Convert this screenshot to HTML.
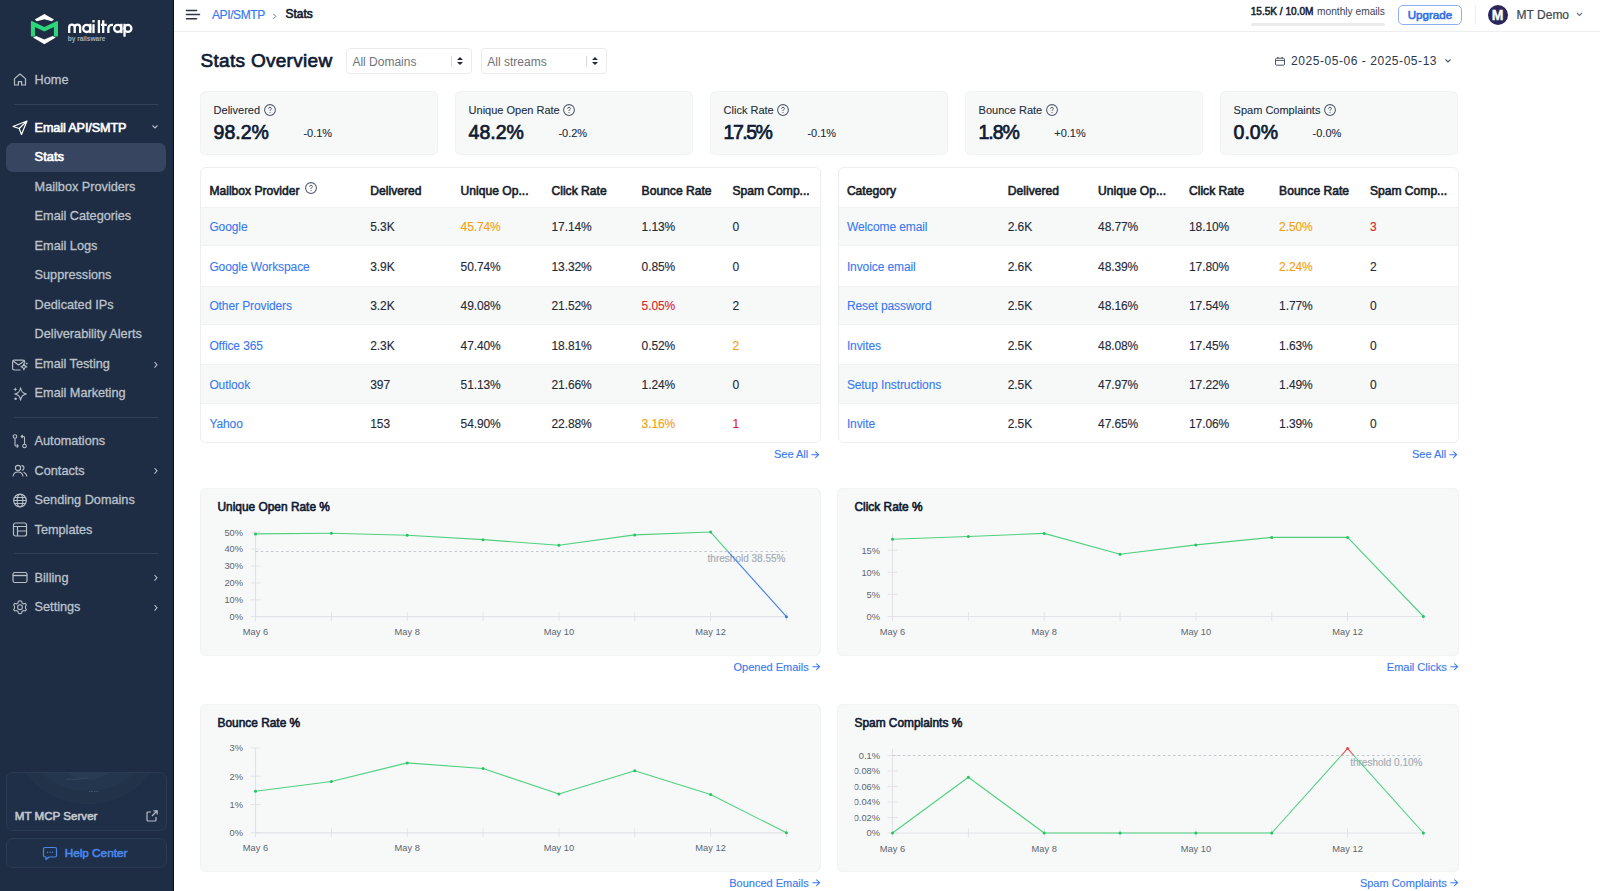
<!DOCTYPE html>
<html><head><meta charset="utf-8"><title>Stats Overview</title>
<style>
html,body{margin:0;padding:0;}
body{width:1600px;height:891px;overflow:hidden;position:relative;background:#fff;font-family:"Liberation Sans", sans-serif;}
.t{position:absolute;line-height:1;white-space:nowrap;}
svg text{font-family:"Liberation Sans", sans-serif;}
</style></head><body>
<div style="position:absolute;left:0px;top:0px;width:173px;height:891px;background:#1e2d44;border-radius:0px;box-sizing:border-box;"></div>
<div style="position:absolute;left:173px;top:0px;width:1px;height:891px;background:#060b2b;border-radius:0px;box-sizing:border-box;"></div>
<svg style="position:absolute;left:0;top:0" width="173" height="60">
<path d="M34.75 19.6 L44.35 14.05 L53.95 19.6 L51.8 21.2 L44.35 19.2 L36.9 21.2 Z" fill="#fff"/>
<path d="M30.9 36.4 V22.2 Q30.9 20.6 32.4 21.2 L44.35 26.9 L56.5 21.2 Q58 20.6 58 22.2 V36.4 H53.9 V27.1 L44.35 31.6 L34.96 27.1 V36.4 Z" fill="#2ed47a"/>
<path d="M33.0 37.6 L36.2 35.9 L44.35 39.5 L52.5 35.9 L55.8 37.6 L44.35 44.3 Z" fill="#fff"/>
<g fill="none" stroke="#fff" stroke-width="2.3">
<path d="M69.2 33.1 V27.4 A2.75 2.75 0 0 1 74.7 27.4 V33.1 M74.7 27.4 A2.72 2.72 0 0 1 80.15 27.4 V33.1"/>
<circle cx="86.75" cy="28.4" r="3.6"/><path d="M90.35 23.8 V33.1"/>
<path d="M93.5 24.2 V33.1"/>
<path d="M98.9 20 V33.1"/>
<path d="M103.2 20.3 V33.1 M100.9 24.8 H106.8"/>
<path d="M108.35 33.1 V28.4 A3.6 3.6 0 0 1 111.95 24.8 H113"/>
<circle cx="117.75" cy="28.4" r="3.6"/><path d="M121.35 23.8 V33.1"/>
<circle cx="127.95" cy="28.4" r="3.45"/><path d="M124.55 23.8 V36.7"/>
</g>
<rect x="92.35" y="20.1" width="2.3" height="2.3" fill="#fff"/>
</svg>
<div class="t" style="left:67.80px;top:36.31px;font-size:6.6px;font-weight:700;color:#a3abb7;letter-spacing:-0.05px;">by railsware</div>
<div class="t" style="left:34.60px;top:74.35px;font-size:12.7px;font-weight:400;color:#bcc2cb;-webkit-text-stroke:0.3px #bcc2cb;">Home</div>
<svg style="position:absolute;left:11px;top:72.1px;" width="18" height="16" viewBox="0 0 18 16"><path d="M3.5 13 V6.6 L9 2 L14.5 6.6 V13 H10.6 V9.6 H7.4 V13 Z" fill="none" stroke="#b7bdc6" stroke-width="1.2" stroke-linejoin="round"/></svg>
<div style="position:absolute;left:14px;top:104px;width:144px;height:1px;background:#34435a;border-radius:0px;box-sizing:border-box;"></div>
<div class="t" style="left:34.60px;top:121.63px;font-size:12.6px;font-weight:400;color:#ffffff;letter-spacing:-0.1px;-webkit-text-stroke:0.63px #ffffff;">Email API/SMTP</div>
<svg style="position:absolute;left:11px;top:119.30000000000001px;" width="18" height="16" viewBox="0 0 18 16"><path d="M2 7.5 L16 2 L10.5 15.5 L8.2 9.5 Z M8.2 9.5 L16 2" fill="none" stroke="#fff" stroke-width="1.2" stroke-linejoin="round"/></svg>
<svg style="position:absolute;left:151px;top:124.30000000000001px;" width="8" height="6" viewBox="0 0 8 6"><path d="M1.5 1.5 L4 4 L6.5 1.5" fill="none" stroke="#b7bdc6" stroke-width="1.1"/></svg>
<div style="position:absolute;left:5.5px;top:143px;width:160.5px;height:29px;background:#374560;border-radius:7px;box-sizing:border-box;"></div>
<div class="t" style="left:34.60px;top:150.88px;font-size:12.9px;font-weight:400;color:#ffffff;-webkit-text-stroke:0.65px #ffffff;">Stats</div>
<div class="t" style="left:34.60px;top:180.55px;font-size:12.7px;font-weight:400;color:#bcc2cb;-webkit-text-stroke:0.3px #bcc2cb;">Mailbox Providers</div>
<div class="t" style="left:34.60px;top:210.05px;font-size:12.7px;font-weight:400;color:#bcc2cb;-webkit-text-stroke:0.3px #bcc2cb;">Email Categories</div>
<div class="t" style="left:34.60px;top:239.55px;font-size:12.7px;font-weight:400;color:#bcc2cb;-webkit-text-stroke:0.3px #bcc2cb;">Email Logs</div>
<div class="t" style="left:34.60px;top:269.05px;font-size:12.7px;font-weight:400;color:#bcc2cb;-webkit-text-stroke:0.3px #bcc2cb;">Suppressions</div>
<div class="t" style="left:34.60px;top:298.55px;font-size:12.7px;font-weight:400;color:#bcc2cb;-webkit-text-stroke:0.3px #bcc2cb;">Dedicated IPs</div>
<div class="t" style="left:34.60px;top:328.05px;font-size:12.7px;font-weight:400;color:#bcc2cb;-webkit-text-stroke:0.3px #bcc2cb;">Deliverability Alerts</div>
<div class="t" style="left:34.60px;top:357.75px;font-size:12.7px;font-weight:400;color:#bcc2cb;-webkit-text-stroke:0.3px #bcc2cb;">Email Testing</div>
<svg style="position:absolute;left:11px;top:355.5px;" width="18" height="16" viewBox="0 0 18 16"><path d="M13.7 7.5 V6 Q13.7 4.2 12 4.2 H3.3 Q1.6 4.2 1.6 6 V12.3 Q1.6 14 3.3 14 H9.5" fill="none" stroke="#b7bdc6" stroke-width="1.2"/><path d="M2.4 5.2 L7.6 8.9 L12.8 5.2" fill="none" stroke="#b7bdc6" stroke-width="1.2" stroke-linejoin="round"/><path d="M12.9 7.6 Q13.2 10.4 15.9 10.8 Q13.2 11.2 12.9 14 Q12.6 11.2 9.9 10.8 Q12.6 10.4 12.9 7.6 Z" fill="#1e2d44" stroke="#b7bdc6" stroke-width="1.1" stroke-linejoin="round"/><circle cx="15.8" cy="7.6" r="0.9" fill="#b7bdc6"/></svg>
<svg style="position:absolute;left:153px;top:360.5px;" width="6" height="8" viewBox="0 0 6 8"><path d="M1.5 1 L4 3.8 L1.5 6.6" fill="none" stroke="#b7bdc6" stroke-width="1.1"/></svg>
<div class="t" style="left:34.60px;top:387.35px;font-size:12.7px;font-weight:400;color:#bcc2cb;-webkit-text-stroke:0.3px #bcc2cb;">Email Marketing</div>
<svg style="position:absolute;left:11px;top:385.1px;" width="18" height="16" viewBox="0 0 18 16"><path d="M9.6 2.8 Q10.3 8.2 15.4 9 Q10.3 9.8 9.6 15.2 Q8.9 9.8 3.8 9 Q8.9 8.2 9.6 2.8 Z" fill="none" stroke="#b7bdc6" stroke-width="1.1" stroke-linejoin="round"/><path d="M4.3 2.2 Q4.5 4 6.3 4.3 Q4.5 4.6 4.3 6.4 Q4.1 4.6 2.3 4.3 Q4.1 4 4.3 2.2 Z" fill="#b7bdc6"/><circle cx="4.6" cy="13.7" r="1.25" fill="#b7bdc6"/></svg>
<div style="position:absolute;left:14px;top:417px;width:144px;height:1px;background:#34435a;border-radius:0px;box-sizing:border-box;"></div>
<div class="t" style="left:34.60px;top:435.05px;font-size:12.7px;font-weight:400;color:#bcc2cb;-webkit-text-stroke:0.3px #bcc2cb;">Automations</div>
<svg style="position:absolute;left:11px;top:432.8px;" width="18" height="16" viewBox="0 0 18 16"><circle cx="4" cy="3.5" r="1.8" fill="none" stroke="#b7bdc6" stroke-width="1.1"/><circle cx="13.5" cy="13" r="1.8" fill="none" stroke="#b7bdc6" stroke-width="1.1"/><path d="M4 5.3 V12 Q4 13 5 13 H7 M5.8 11.3 L7.2 13 L5.8 14.6 M13.5 11.2 V4.5 Q13.5 3.5 12.5 3.5 H10.5 M11.7 2 L10.2 3.5 L11.7 5" fill="none" stroke="#b7bdc6" stroke-width="1.1"/></svg>
<div class="t" style="left:34.60px;top:464.55px;font-size:12.7px;font-weight:400;color:#bcc2cb;-webkit-text-stroke:0.3px #bcc2cb;">Contacts</div>
<svg style="position:absolute;left:11px;top:462.3px;" width="18" height="16" viewBox="0 0 18 16"><circle cx="7" cy="6" r="2.6" fill="none" stroke="#b7bdc6" stroke-width="1.1"/><path d="M2 14.5 Q2.5 10 7 10 Q11.5 10 12 14.5" fill="none" stroke="#b7bdc6" stroke-width="1.1"/><path d="M10.5 3.6 Q13 3.8 13 6 Q13 8 10.8 8.5 M12.5 10.2 Q15.5 11 15.8 14.5" fill="none" stroke="#b7bdc6" stroke-width="1.1"/></svg>
<svg style="position:absolute;left:153px;top:467.3px;" width="6" height="8" viewBox="0 0 6 8"><path d="M1.5 1 L4 3.8 L1.5 6.6" fill="none" stroke="#b7bdc6" stroke-width="1.1"/></svg>
<div class="t" style="left:34.60px;top:494.05px;font-size:12.7px;font-weight:400;color:#bcc2cb;-webkit-text-stroke:0.3px #bcc2cb;">Sending Domains</div>
<svg style="position:absolute;left:11px;top:491.8px;" width="18" height="16" viewBox="0 0 18 16"><circle cx="9" cy="8.5" r="6.3" fill="none" stroke="#b7bdc6" stroke-width="1.2"/><ellipse cx="9" cy="8.5" rx="2.8" ry="6.3" fill="none" stroke="#b7bdc6" stroke-width="1.1"/><path d="M2.7 8.5 H15.3 M3.5 5.5 H14.5 M3.5 11.5 H14.5" stroke="#b7bdc6" stroke-width="1.1"/></svg>
<div class="t" style="left:34.60px;top:523.55px;font-size:12.7px;font-weight:400;color:#bcc2cb;-webkit-text-stroke:0.3px #bcc2cb;">Templates</div>
<svg style="position:absolute;left:11px;top:521.3px;" width="18" height="16" viewBox="0 0 18 16"><rect x="2.5" y="2" width="13" height="13" rx="2" fill="none" stroke="#b7bdc6" stroke-width="1.2"/><path d="M2.5 5.5 H15.5 M6.5 5.5 V15 M6.5 10 H15.5" stroke="#b7bdc6" stroke-width="1.2"/></svg>
<div style="position:absolute;left:14px;top:553px;width:144px;height:1px;background:#34435a;border-radius:0px;box-sizing:border-box;"></div>
<div class="t" style="left:34.60px;top:571.55px;font-size:12.7px;font-weight:400;color:#bcc2cb;-webkit-text-stroke:0.3px #bcc2cb;">Billing</div>
<svg style="position:absolute;left:11px;top:569.3px;" width="18" height="16" viewBox="0 0 18 16"><rect x="2" y="3.5" width="14" height="10" rx="1.8" fill="none" stroke="#b7bdc6" stroke-width="1.2"/><path d="M2 6.5 H16" stroke="#b7bdc6" stroke-width="1.4"/></svg>
<svg style="position:absolute;left:153px;top:574.3px;" width="6" height="8" viewBox="0 0 6 8"><path d="M1.5 1 L4 3.8 L1.5 6.6" fill="none" stroke="#b7bdc6" stroke-width="1.1"/></svg>
<div class="t" style="left:34.60px;top:600.85px;font-size:12.7px;font-weight:400;color:#bcc2cb;-webkit-text-stroke:0.3px #bcc2cb;">Settings</div>
<svg style="position:absolute;left:11px;top:598.6px;" width="18" height="16" viewBox="0 0 18 16"><path d="M9 1.8 L10.6 2.2 L11 4 L12.6 4.9 L14.3 4.3 L15.3 5.7 L14.5 7.3 V9.1 L15.3 10.6 L14.3 12 L12.6 11.5 L11 12.4 L10.6 14.2 L9 14.6 L7.4 14.2 L7 12.4 L5.4 11.5 L3.7 12 L2.7 10.6 L3.5 9.1 V7.3 L2.7 5.7 L3.7 4.3 L5.4 4.9 L7 4 L7.4 2.2 Z" fill="none" stroke="#b7bdc6" stroke-width="1.1" stroke-linejoin="round"/><circle cx="9" cy="8.2" r="2.4" fill="none" stroke="#b7bdc6" stroke-width="1.1"/></svg>
<svg style="position:absolute;left:153px;top:603.6px;" width="6" height="8" viewBox="0 0 6 8"><path d="M1.5 1 L4 3.8 L1.5 6.6" fill="none" stroke="#b7bdc6" stroke-width="1.1"/></svg>
<div style="position:absolute;left:5.5px;top:771.5px;width:161px;height:59px;border-radius:7px;border:1px solid #2b3b53;box-sizing:border-box;overflow:hidden;background:#1f2f47">
<svg width="161" height="59" style="position:absolute;left:-1px;top:-1px"><circle cx="82" cy="-46.25" r="77.75" fill="#213249" stroke="#25374f" stroke-width="1"/><circle cx="82" cy="-49.25" r="68.75" fill="#24364e"/><circle cx="82" cy="-30" r="37.5" fill="#293b53"/><path d="M60 7.2 Q70 8 82 6" stroke="#3a4b63" stroke-width="0.8" fill="none"/><path d="M83 19.5 H93" stroke="#5b6a80" stroke-width="0.6" stroke-dasharray="1.5 1" fill="none"/></svg></div>
<div class="t" style="left:14.80px;top:810.18px;font-size:11.6px;font-weight:400;color:#c3c8d0;-webkit-text-stroke:0.58px #c3c8d0;">MT MCP Server</div>
<svg style="position:absolute;left:145px;top:809px;" width="14" height="14" viewBox="0 0 14 14"><path d="M6 3 H3 Q2 3 2 4 V11 Q2 12 3 12 H10 Q11 12 11 11 V8" fill="none" stroke="#b7bdc6" stroke-width="1.2"/><path d="M7 7 L12 2 M8.5 1.8 H12.2 V5.5" fill="none" stroke="#b7bdc6" stroke-width="1.2"/></svg>
<div style="position:absolute;left:5.5px;top:838px;width:161px;height:30px;background:#1f2f47;border-radius:7px;box-sizing:border-box;border:1px solid #2b3b53;"></div>
<svg style="position:absolute;left:42px;top:846px;" width="16" height="15" viewBox="0 0 16 15"><path d="M3 1.5 H13 Q14.5 1.5 14.5 3 V9.5 Q14.5 11 13 11 H7 L4 13.5 V11 H3 Q1.5 11 1.5 9.5 V3 Q1.5 1.5 3 1.5 Z" fill="none" stroke="#4a86e8" stroke-width="1.2" stroke-linejoin="round"/><circle cx="5.5" cy="6.3" r=".7" fill="#4a86e8"/><circle cx="8" cy="6.3" r=".7" fill="#4a86e8"/><circle cx="10.5" cy="6.3" r=".7" fill="#4a86e8"/></svg>
<div class="t" style="left:64.70px;top:847.35px;font-size:11.75px;font-weight:400;color:#4a86e8;-webkit-text-stroke:0.59px #4a86e8;">Help Center</div>
<div style="position:absolute;left:174px;top:31px;width:1426px;height:1px;background:#eceef0;border-radius:0px;box-sizing:border-box;"></div>
<svg style="position:absolute;left:185px;top:9px;" width="16" height="12" viewBox="0 0 16 12"><path d="M1.5 1.5 H11.5 M1.5 5.5 H14.5 M1.5 9.8 H11.5" stroke="#2b3445" stroke-width="1.6" stroke-linecap="round"/></svg>
<div class="t" style="left:212.00px;top:8.64px;font-size:12px;font-weight:400;color:#3a7af0;letter-spacing:-0.4px;-webkit-text-stroke:0.2px #3a7af0;">API/SMTP</div>
<svg style="position:absolute;left:272px;top:11.5px;" width="6" height="9" viewBox="0 0 6 9"><path d="M1.5 2 L3.9 4.4 L1.5 6.8" fill="none" stroke="#6b7280" stroke-width="1"/></svg>
<div class="t" style="left:285.60px;top:8.53px;font-size:11.9px;font-weight:400;color:#121a2b;-webkit-text-stroke:0.60px #121a2b;">Stats</div>
<div class="t" style="left:1250.70px;top:6.85px;font-size:10.1px;font-weight:400;color:#1a2233;-webkit-text-stroke:0.51px #1a2233;">15.5K / 10.0M</div>
<div class="t" style="left:1317.00px;top:6.77px;font-size:10.2px;font-weight:400;color:#3a4250;">monthly emails</div>
<div style="position:absolute;left:1251px;top:22.5px;width:134px;height:3px;background:#ebebec;border-radius:2px;box-sizing:border-box;"></div>
<div style="position:absolute;left:1398px;top:5px;width:63.5px;height:19.5px;background:#fff;border-radius:5px;box-sizing:border-box;border:1px solid #8eb0f3;"></div>
<div class="t" style="left:1407.70px;top:9.38px;font-size:11.6px;font-weight:400;color:#2e6fe6;-webkit-text-stroke:0.58px #2e6fe6;">Upgrade</div>
<div style="position:absolute;left:1474.5px;top:5px;width:1px;height:19.5px;background:#eceef0;border-radius:0px;box-sizing:border-box;"></div>
<div style="position:absolute;left:1487.5px;top:4.8px;width:20px;height:20px;border-radius:50%;background:#2a265c"></div>
<div class="t" style="left:1197.60px;width:600px;text-align:center;top:8.35px;font-size:14px;font-weight:700;color:#ffffff;-webkit-text-stroke:0.4px #fff;">M</div>
<div class="t" style="left:1516.60px;top:8.64px;font-size:12px;font-weight:400;color:#3d4654;-webkit-text-stroke:0.2px #3d4654;">MT Demo</div>
<svg style="position:absolute;left:1575px;top:11px;" width="9" height="7" viewBox="0 0 9 7"><path d="M2 2 L4.5 4.5 L7 2" fill="none" stroke="#6b7280" stroke-width="1.1"/></svg>
<div class="t" style="left:200.50px;top:51.42px;font-size:19.0px;font-weight:400;color:#0f1a33;letter-spacing:0.3px;-webkit-text-stroke:0.68px #0f1a33;">Stats Overview</div>
<div style="position:absolute;left:345.6px;top:48.4px;width:126px;height:25.2px;background:#fff;border-radius:4px;box-sizing:border-box;border:1px solid #e9ebee;"></div>
<div class="t" style="left:352.40px;top:56.04px;font-size:12px;font-weight:400;color:#6f737b;">All Domains</div>
<div style="position:absolute;left:451.40000000000003px;top:56px;width:1px;height:11px;background:#d6d9de;border-radius:0px;box-sizing:border-box;"></div>
<svg style="position:absolute;left:456.1px;top:56px;" width="8" height="10" viewBox="0 0 8 10"><path d="M1 4 L4 1 L7 4 Z M1 6 L4 9 L7 6 Z" fill="#1f2937"/></svg>
<div style="position:absolute;left:480.5px;top:48.4px;width:126px;height:25.2px;background:#fff;border-radius:4px;box-sizing:border-box;border:1px solid #e9ebee;"></div>
<div class="t" style="left:487.30px;top:56.04px;font-size:12px;font-weight:400;color:#6f737b;">All streams</div>
<div style="position:absolute;left:586.3px;top:56px;width:1px;height:11px;background:#d6d9de;border-radius:0px;box-sizing:border-box;"></div>
<svg style="position:absolute;left:591.0px;top:56px;" width="8" height="10" viewBox="0 0 8 10"><path d="M1 4 L4 1 L7 4 Z M1 6 L4 9 L7 6 Z" fill="#1f2937"/></svg>
<svg style="position:absolute;left:1274px;top:55.5px;" width="12" height="11" viewBox="0 0 12 11"><rect x="1.5" y="2.2" width="9" height="7" rx="1.2" fill="none" stroke="#4b5563" stroke-width="1"/><path d="M1.5 4.4 H10.5 M3.8 1 V2.8 M8.2 1 V2.8" stroke="#4b5563" stroke-width="1"/></svg>
<div class="t" style="left:1291.00px;top:55.44px;font-size:12px;font-weight:400;color:#2a374c;letter-spacing:0.55px;">2025-05-06 - 2025-05-13</div>
<svg style="position:absolute;left:1444px;top:57.5px;" width="8" height="6" viewBox="0 0 8 6"><path d="M1.5 1.5 L4 4 L6.5 1.5" fill="none" stroke="#4b5563" stroke-width="1.1"/></svg>
<div style="position:absolute;left:200px;top:91px;width:238px;height:63.5px;background:#f7f9f9;border-radius:5.5px;box-sizing:border-box;border:1px solid #f1f3f3;"></div>
<div class="t" id="lab0" style="left:213.60px;top:104.69px;font-size:11px;font-weight:400;color:#222c3b;-webkit-text-stroke:0.1px #222c3b;">Delivered<svg width="12" height="12" viewBox="0 0 12 12" style="vertical-align:top;margin-left:3.7px;position:relative;top:-0.7px"><circle cx="6" cy="6" r="5.4" fill="none" stroke="#4f5968" stroke-width="1.05"/><path d="M4.6 4.7 Q4.6 3.3 6 3.3 Q7.4 3.3 7.4 4.6 Q7.4 5.4 6.5 5.8 Q6 6.1 6 7" fill="none" stroke="#4f5968" stroke-width="0.95"/><circle cx="6" cy="8.6" r=".6" fill="#4f5968"/></svg></div>
<div class="t" id="val0" style="left:213.60px;top:122.79px;font-size:19.5px;font-weight:400;color:#0f1a33;-webkit-text-stroke:0.70px #0f1a33;">98.2%<span style="font-size:11px;font-weight:400;color:#222c3b;-webkit-text-stroke:0.1px #222c3b;margin-left:34.5px;position:relative;top:-2px;letter-spacing:0">-0.1%</span></div>
<div style="position:absolute;left:455px;top:91px;width:238px;height:63.5px;background:#f7f9f9;border-radius:5.5px;box-sizing:border-box;border:1px solid #f1f3f3;"></div>
<div class="t" id="lab1" style="left:468.60px;top:104.69px;font-size:11px;font-weight:400;color:#222c3b;-webkit-text-stroke:0.1px #222c3b;">Unique Open Rate<svg width="12" height="12" viewBox="0 0 12 12" style="vertical-align:top;margin-left:3.7px;position:relative;top:-0.7px"><circle cx="6" cy="6" r="5.4" fill="none" stroke="#4f5968" stroke-width="1.05"/><path d="M4.6 4.7 Q4.6 3.3 6 3.3 Q7.4 3.3 7.4 4.6 Q7.4 5.4 6.5 5.8 Q6 6.1 6 7" fill="none" stroke="#4f5968" stroke-width="0.95"/><circle cx="6" cy="8.6" r=".6" fill="#4f5968"/></svg></div>
<div class="t" id="val1" style="left:468.60px;top:122.79px;font-size:19.5px;font-weight:400;color:#0f1a33;-webkit-text-stroke:0.70px #0f1a33;">48.2%<span style="font-size:11px;font-weight:400;color:#222c3b;-webkit-text-stroke:0.1px #222c3b;margin-left:34.5px;position:relative;top:-2px;letter-spacing:0">-0.2%</span></div>
<div style="position:absolute;left:710px;top:91px;width:238px;height:63.5px;background:#f7f9f9;border-radius:5.5px;box-sizing:border-box;border:1px solid #f1f3f3;"></div>
<div class="t" id="lab2" style="left:723.60px;top:104.69px;font-size:11px;font-weight:400;color:#222c3b;-webkit-text-stroke:0.1px #222c3b;">Click Rate<svg width="12" height="12" viewBox="0 0 12 12" style="vertical-align:top;margin-left:3.7px;position:relative;top:-0.7px"><circle cx="6" cy="6" r="5.4" fill="none" stroke="#4f5968" stroke-width="1.05"/><path d="M4.6 4.7 Q4.6 3.3 6 3.3 Q7.4 3.3 7.4 4.6 Q7.4 5.4 6.5 5.8 Q6 6.1 6 7" fill="none" stroke="#4f5968" stroke-width="0.95"/><circle cx="6" cy="8.6" r=".6" fill="#4f5968"/></svg></div>
<div class="t" id="val2" style="left:723.60px;top:122.79px;font-size:19.5px;font-weight:400;color:#0f1a33;letter-spacing:-1.5px;-webkit-text-stroke:0.70px #0f1a33;">17.5%<span style="font-size:11px;font-weight:400;color:#222c3b;-webkit-text-stroke:0.1px #222c3b;margin-left:36.0px;position:relative;top:-2px;letter-spacing:0">-0.1%</span></div>
<div style="position:absolute;left:965px;top:91px;width:238px;height:63.5px;background:#f7f9f9;border-radius:5.5px;box-sizing:border-box;border:1px solid #f1f3f3;"></div>
<div class="t" id="lab3" style="left:978.60px;top:104.69px;font-size:11px;font-weight:400;color:#222c3b;-webkit-text-stroke:0.1px #222c3b;">Bounce Rate<svg width="12" height="12" viewBox="0 0 12 12" style="vertical-align:top;margin-left:3.7px;position:relative;top:-0.7px"><circle cx="6" cy="6" r="5.4" fill="none" stroke="#4f5968" stroke-width="1.05"/><path d="M4.6 4.7 Q4.6 3.3 6 3.3 Q7.4 3.3 7.4 4.6 Q7.4 5.4 6.5 5.8 Q6 6.1 6 7" fill="none" stroke="#4f5968" stroke-width="0.95"/><circle cx="6" cy="8.6" r=".6" fill="#4f5968"/></svg></div>
<div class="t" id="val3" style="left:978.60px;top:122.79px;font-size:19.5px;font-weight:400;color:#0f1a33;letter-spacing:-1.1px;-webkit-text-stroke:0.70px #0f1a33;">1.8%<span style="font-size:11px;font-weight:400;color:#222c3b;-webkit-text-stroke:0.1px #222c3b;margin-left:35.6px;position:relative;top:-2px;letter-spacing:0">+0.1%</span></div>
<div style="position:absolute;left:1220px;top:91px;width:238px;height:63.5px;background:#f7f9f9;border-radius:5.5px;box-sizing:border-box;border:1px solid #f1f3f3;"></div>
<div class="t" id="lab4" style="left:1233.60px;top:104.69px;font-size:11px;font-weight:400;color:#222c3b;-webkit-text-stroke:0.1px #222c3b;">Spam Complaints<svg width="12" height="12" viewBox="0 0 12 12" style="vertical-align:top;margin-left:3.7px;position:relative;top:-0.7px"><circle cx="6" cy="6" r="5.4" fill="none" stroke="#4f5968" stroke-width="1.05"/><path d="M4.6 4.7 Q4.6 3.3 6 3.3 Q7.4 3.3 7.4 4.6 Q7.4 5.4 6.5 5.8 Q6 6.1 6 7" fill="none" stroke="#4f5968" stroke-width="0.95"/><circle cx="6" cy="8.6" r=".6" fill="#4f5968"/></svg></div>
<div class="t" id="val4" style="left:1233.60px;top:122.79px;font-size:19.5px;font-weight:400;color:#0f1a33;-webkit-text-stroke:0.70px #0f1a33;">0.0%<span style="font-size:11px;font-weight:400;color:#222c3b;-webkit-text-stroke:0.1px #222c3b;margin-left:34.5px;position:relative;top:-2px;letter-spacing:0">-0.0%</span></div>
<div style="position:absolute;left:200px;top:167px;width:620.5px;height:276px;background:#fff;border-radius:6px;box-sizing:border-box;border:1px solid #eceef2;"></div>
<div style="position:absolute;left:201px;top:207.0px;width:618.5px;height:39.33px;background:#f7f9f9;border-radius:0px;box-sizing:border-box;border-top:1px solid #f1f3f3;border-bottom:1px solid #f1f3f3;"></div>
<div style="position:absolute;left:201px;top:285.65999999999997px;width:618.5px;height:39.33px;background:#f7f9f9;border-radius:0px;box-sizing:border-box;border-top:1px solid #f1f3f3;border-bottom:1px solid #f1f3f3;"></div>
<div style="position:absolute;left:201px;top:364.32px;width:618.5px;height:39.33px;background:#f7f9f9;border-radius:0px;box-sizing:border-box;border-top:1px solid #f1f3f3;border-bottom:1px solid #f1f3f3;"></div>
<div class="t" style="left:209.40px;top:184.96px;font-size:12.1px;font-weight:400;color:#161e2c;-webkit-text-stroke:0.60px #161e2c;">Mailbox Provider</div>
<div class="t" style="left:370.30px;top:184.96px;font-size:12.1px;font-weight:400;color:#161e2c;-webkit-text-stroke:0.60px #161e2c;">Delivered</div>
<div class="t" style="left:460.60px;top:184.96px;font-size:12.1px;font-weight:400;color:#161e2c;-webkit-text-stroke:0.60px #161e2c;">Unique Op...</div>
<div class="t" style="left:551.50px;top:184.96px;font-size:12.1px;font-weight:400;color:#161e2c;-webkit-text-stroke:0.60px #161e2c;">Click Rate</div>
<div class="t" style="left:641.60px;top:184.96px;font-size:12.1px;font-weight:400;color:#161e2c;-webkit-text-stroke:0.60px #161e2c;">Bounce Rate</div>
<div class="t" style="left:732.40px;top:184.96px;font-size:12.1px;font-weight:400;color:#161e2c;-webkit-text-stroke:0.60px #161e2c;">Spam Comp...</div>
<div class="t" style="left:209.40px;top:221.44px;font-size:12px;font-weight:400;color:#3a7af0;letter-spacing:-0.1px;-webkit-text-stroke:0.12px #3a7af0;">Google</div>
<div class="t" style="left:370.30px;top:221.44px;font-size:12px;font-weight:400;color:#1f2937;letter-spacing:-0.1px;-webkit-text-stroke:0.12px #1f2937;">5.3K</div>
<div class="t" style="left:460.60px;top:221.44px;font-size:12px;font-weight:400;color:#f59e0b;letter-spacing:-0.1px;-webkit-text-stroke:0.12px #f59e0b;">45.74%</div>
<div class="t" style="left:551.50px;top:221.44px;font-size:12px;font-weight:400;color:#1f2937;letter-spacing:-0.1px;-webkit-text-stroke:0.12px #1f2937;">17.14%</div>
<div class="t" style="left:641.60px;top:221.44px;font-size:12px;font-weight:400;color:#1f2937;letter-spacing:-0.1px;-webkit-text-stroke:0.12px #1f2937;">1.13%</div>
<div class="t" style="left:732.40px;top:221.44px;font-size:12px;font-weight:400;color:#1f2937;letter-spacing:-0.1px;-webkit-text-stroke:0.12px #1f2937;">0</div>
<div class="t" style="left:209.40px;top:260.84px;font-size:12px;font-weight:400;color:#3a7af0;letter-spacing:-0.1px;-webkit-text-stroke:0.12px #3a7af0;">Google Workspace</div>
<div class="t" style="left:370.30px;top:260.84px;font-size:12px;font-weight:400;color:#1f2937;letter-spacing:-0.1px;-webkit-text-stroke:0.12px #1f2937;">3.9K</div>
<div class="t" style="left:460.60px;top:260.84px;font-size:12px;font-weight:400;color:#1f2937;letter-spacing:-0.1px;-webkit-text-stroke:0.12px #1f2937;">50.74%</div>
<div class="t" style="left:551.50px;top:260.84px;font-size:12px;font-weight:400;color:#1f2937;letter-spacing:-0.1px;-webkit-text-stroke:0.12px #1f2937;">13.32%</div>
<div class="t" style="left:641.60px;top:260.84px;font-size:12px;font-weight:400;color:#1f2937;letter-spacing:-0.1px;-webkit-text-stroke:0.12px #1f2937;">0.85%</div>
<div class="t" style="left:732.40px;top:260.84px;font-size:12px;font-weight:400;color:#1f2937;letter-spacing:-0.1px;-webkit-text-stroke:0.12px #1f2937;">0</div>
<div class="t" style="left:209.40px;top:300.24px;font-size:12px;font-weight:400;color:#3a7af0;letter-spacing:-0.1px;-webkit-text-stroke:0.12px #3a7af0;">Other Providers</div>
<div class="t" style="left:370.30px;top:300.24px;font-size:12px;font-weight:400;color:#1f2937;letter-spacing:-0.1px;-webkit-text-stroke:0.12px #1f2937;">3.2K</div>
<div class="t" style="left:460.60px;top:300.24px;font-size:12px;font-weight:400;color:#1f2937;letter-spacing:-0.1px;-webkit-text-stroke:0.12px #1f2937;">49.08%</div>
<div class="t" style="left:551.50px;top:300.24px;font-size:12px;font-weight:400;color:#1f2937;letter-spacing:-0.1px;-webkit-text-stroke:0.12px #1f2937;">21.52%</div>
<div class="t" style="left:641.60px;top:300.24px;font-size:12px;font-weight:400;color:#dc2626;letter-spacing:-0.1px;-webkit-text-stroke:0.12px #dc2626;">5.05%</div>
<div class="t" style="left:732.40px;top:300.24px;font-size:12px;font-weight:400;color:#1f2937;letter-spacing:-0.1px;-webkit-text-stroke:0.12px #1f2937;">2</div>
<div class="t" style="left:209.40px;top:339.64px;font-size:12px;font-weight:400;color:#3a7af0;letter-spacing:-0.1px;-webkit-text-stroke:0.12px #3a7af0;">Office 365</div>
<div class="t" style="left:370.30px;top:339.64px;font-size:12px;font-weight:400;color:#1f2937;letter-spacing:-0.1px;-webkit-text-stroke:0.12px #1f2937;">2.3K</div>
<div class="t" style="left:460.60px;top:339.64px;font-size:12px;font-weight:400;color:#1f2937;letter-spacing:-0.1px;-webkit-text-stroke:0.12px #1f2937;">47.40%</div>
<div class="t" style="left:551.50px;top:339.64px;font-size:12px;font-weight:400;color:#1f2937;letter-spacing:-0.1px;-webkit-text-stroke:0.12px #1f2937;">18.81%</div>
<div class="t" style="left:641.60px;top:339.64px;font-size:12px;font-weight:400;color:#1f2937;letter-spacing:-0.1px;-webkit-text-stroke:0.12px #1f2937;">0.52%</div>
<div class="t" style="left:732.40px;top:339.64px;font-size:12px;font-weight:400;color:#f59e0b;letter-spacing:-0.1px;-webkit-text-stroke:0.12px #f59e0b;">2</div>
<div class="t" style="left:209.40px;top:379.04px;font-size:12px;font-weight:400;color:#3a7af0;letter-spacing:-0.1px;-webkit-text-stroke:0.12px #3a7af0;">Outlook</div>
<div class="t" style="left:370.30px;top:379.04px;font-size:12px;font-weight:400;color:#1f2937;letter-spacing:-0.1px;-webkit-text-stroke:0.12px #1f2937;">397</div>
<div class="t" style="left:460.60px;top:379.04px;font-size:12px;font-weight:400;color:#1f2937;letter-spacing:-0.1px;-webkit-text-stroke:0.12px #1f2937;">51.13%</div>
<div class="t" style="left:551.50px;top:379.04px;font-size:12px;font-weight:400;color:#1f2937;letter-spacing:-0.1px;-webkit-text-stroke:0.12px #1f2937;">21.66%</div>
<div class="t" style="left:641.60px;top:379.04px;font-size:12px;font-weight:400;color:#1f2937;letter-spacing:-0.1px;-webkit-text-stroke:0.12px #1f2937;">1.24%</div>
<div class="t" style="left:732.40px;top:379.04px;font-size:12px;font-weight:400;color:#1f2937;letter-spacing:-0.1px;-webkit-text-stroke:0.12px #1f2937;">0</div>
<div class="t" style="left:209.40px;top:418.44px;font-size:12px;font-weight:400;color:#3a7af0;letter-spacing:-0.1px;-webkit-text-stroke:0.12px #3a7af0;">Yahoo</div>
<div class="t" style="left:370.30px;top:418.44px;font-size:12px;font-weight:400;color:#1f2937;letter-spacing:-0.1px;-webkit-text-stroke:0.12px #1f2937;">153</div>
<div class="t" style="left:460.60px;top:418.44px;font-size:12px;font-weight:400;color:#1f2937;letter-spacing:-0.1px;-webkit-text-stroke:0.12px #1f2937;">54.90%</div>
<div class="t" style="left:551.50px;top:418.44px;font-size:12px;font-weight:400;color:#1f2937;letter-spacing:-0.1px;-webkit-text-stroke:0.12px #1f2937;">22.88%</div>
<div class="t" style="left:641.60px;top:418.44px;font-size:12px;font-weight:400;color:#f59e0b;letter-spacing:-0.1px;-webkit-text-stroke:0.12px #f59e0b;">3.16%</div>
<div class="t" style="left:732.40px;top:418.44px;font-size:12px;font-weight:400;color:#dc2626;letter-spacing:-0.1px;-webkit-text-stroke:0.12px #dc2626;">1</div>
<svg style="position:absolute;left:305px;top:182px;" width="12" height="12" viewBox="0 0 12 12"><circle cx="6" cy="6" r="5.4" fill="none" stroke="#4f5968" stroke-width="1.05"/><path d="M4.6 4.7 Q4.6 3.3 6 3.3 Q7.4 3.3 7.4 4.6 Q7.4 5.4 6.5 5.8 Q6 6.1 6 7" fill="none" stroke="#4f5968" stroke-width="0.95"/><circle cx="6" cy="8.6" r=".6" fill="#4f5968"/></svg>
<div style="position:absolute;left:837.5px;top:167px;width:621px;height:276px;background:#fff;border-radius:6px;box-sizing:border-box;border:1px solid #eceef2;"></div>
<div style="position:absolute;left:838.5px;top:207.0px;width:619px;height:39.33px;background:#f7f9f9;border-radius:0px;box-sizing:border-box;border-top:1px solid #f1f3f3;border-bottom:1px solid #f1f3f3;"></div>
<div style="position:absolute;left:838.5px;top:285.65999999999997px;width:619px;height:39.33px;background:#f7f9f9;border-radius:0px;box-sizing:border-box;border-top:1px solid #f1f3f3;border-bottom:1px solid #f1f3f3;"></div>
<div style="position:absolute;left:838.5px;top:364.32px;width:619px;height:39.33px;background:#f7f9f9;border-radius:0px;box-sizing:border-box;border-top:1px solid #f1f3f3;border-bottom:1px solid #f1f3f3;"></div>
<div class="t" style="left:846.90px;top:184.96px;font-size:12.1px;font-weight:400;color:#161e2c;-webkit-text-stroke:0.60px #161e2c;">Category</div>
<div class="t" style="left:1007.80px;top:184.96px;font-size:12.1px;font-weight:400;color:#161e2c;-webkit-text-stroke:0.60px #161e2c;">Delivered</div>
<div class="t" style="left:1098.10px;top:184.96px;font-size:12.1px;font-weight:400;color:#161e2c;-webkit-text-stroke:0.60px #161e2c;">Unique Op...</div>
<div class="t" style="left:1189.00px;top:184.96px;font-size:12.1px;font-weight:400;color:#161e2c;-webkit-text-stroke:0.60px #161e2c;">Click Rate</div>
<div class="t" style="left:1279.10px;top:184.96px;font-size:12.1px;font-weight:400;color:#161e2c;-webkit-text-stroke:0.60px #161e2c;">Bounce Rate</div>
<div class="t" style="left:1369.90px;top:184.96px;font-size:12.1px;font-weight:400;color:#161e2c;-webkit-text-stroke:0.60px #161e2c;">Spam Comp...</div>
<div class="t" style="left:846.90px;top:221.44px;font-size:12px;font-weight:400;color:#3a7af0;letter-spacing:-0.1px;-webkit-text-stroke:0.12px #3a7af0;">Welcome email</div>
<div class="t" style="left:1007.80px;top:221.44px;font-size:12px;font-weight:400;color:#1f2937;letter-spacing:-0.1px;-webkit-text-stroke:0.12px #1f2937;">2.6K</div>
<div class="t" style="left:1098.10px;top:221.44px;font-size:12px;font-weight:400;color:#1f2937;letter-spacing:-0.1px;-webkit-text-stroke:0.12px #1f2937;">48.77%</div>
<div class="t" style="left:1189.00px;top:221.44px;font-size:12px;font-weight:400;color:#1f2937;letter-spacing:-0.1px;-webkit-text-stroke:0.12px #1f2937;">18.10%</div>
<div class="t" style="left:1279.10px;top:221.44px;font-size:12px;font-weight:400;color:#f59e0b;letter-spacing:-0.1px;-webkit-text-stroke:0.12px #f59e0b;">2.50%</div>
<div class="t" style="left:1369.90px;top:221.44px;font-size:12px;font-weight:400;color:#dc2626;letter-spacing:-0.1px;-webkit-text-stroke:0.12px #dc2626;">3</div>
<div class="t" style="left:846.90px;top:260.84px;font-size:12px;font-weight:400;color:#3a7af0;letter-spacing:-0.1px;-webkit-text-stroke:0.12px #3a7af0;">Invoice email</div>
<div class="t" style="left:1007.80px;top:260.84px;font-size:12px;font-weight:400;color:#1f2937;letter-spacing:-0.1px;-webkit-text-stroke:0.12px #1f2937;">2.6K</div>
<div class="t" style="left:1098.10px;top:260.84px;font-size:12px;font-weight:400;color:#1f2937;letter-spacing:-0.1px;-webkit-text-stroke:0.12px #1f2937;">48.39%</div>
<div class="t" style="left:1189.00px;top:260.84px;font-size:12px;font-weight:400;color:#1f2937;letter-spacing:-0.1px;-webkit-text-stroke:0.12px #1f2937;">17.80%</div>
<div class="t" style="left:1279.10px;top:260.84px;font-size:12px;font-weight:400;color:#f59e0b;letter-spacing:-0.1px;-webkit-text-stroke:0.12px #f59e0b;">2.24%</div>
<div class="t" style="left:1369.90px;top:260.84px;font-size:12px;font-weight:400;color:#1f2937;letter-spacing:-0.1px;-webkit-text-stroke:0.12px #1f2937;">2</div>
<div class="t" style="left:846.90px;top:300.24px;font-size:12px;font-weight:400;color:#3a7af0;letter-spacing:-0.1px;-webkit-text-stroke:0.12px #3a7af0;">Reset password</div>
<div class="t" style="left:1007.80px;top:300.24px;font-size:12px;font-weight:400;color:#1f2937;letter-spacing:-0.1px;-webkit-text-stroke:0.12px #1f2937;">2.5K</div>
<div class="t" style="left:1098.10px;top:300.24px;font-size:12px;font-weight:400;color:#1f2937;letter-spacing:-0.1px;-webkit-text-stroke:0.12px #1f2937;">48.16%</div>
<div class="t" style="left:1189.00px;top:300.24px;font-size:12px;font-weight:400;color:#1f2937;letter-spacing:-0.1px;-webkit-text-stroke:0.12px #1f2937;">17.54%</div>
<div class="t" style="left:1279.10px;top:300.24px;font-size:12px;font-weight:400;color:#1f2937;letter-spacing:-0.1px;-webkit-text-stroke:0.12px #1f2937;">1.77%</div>
<div class="t" style="left:1369.90px;top:300.24px;font-size:12px;font-weight:400;color:#1f2937;letter-spacing:-0.1px;-webkit-text-stroke:0.12px #1f2937;">0</div>
<div class="t" style="left:846.90px;top:339.64px;font-size:12px;font-weight:400;color:#3a7af0;letter-spacing:-0.1px;-webkit-text-stroke:0.12px #3a7af0;">Invites</div>
<div class="t" style="left:1007.80px;top:339.64px;font-size:12px;font-weight:400;color:#1f2937;letter-spacing:-0.1px;-webkit-text-stroke:0.12px #1f2937;">2.5K</div>
<div class="t" style="left:1098.10px;top:339.64px;font-size:12px;font-weight:400;color:#1f2937;letter-spacing:-0.1px;-webkit-text-stroke:0.12px #1f2937;">48.08%</div>
<div class="t" style="left:1189.00px;top:339.64px;font-size:12px;font-weight:400;color:#1f2937;letter-spacing:-0.1px;-webkit-text-stroke:0.12px #1f2937;">17.45%</div>
<div class="t" style="left:1279.10px;top:339.64px;font-size:12px;font-weight:400;color:#1f2937;letter-spacing:-0.1px;-webkit-text-stroke:0.12px #1f2937;">1.63%</div>
<div class="t" style="left:1369.90px;top:339.64px;font-size:12px;font-weight:400;color:#1f2937;letter-spacing:-0.1px;-webkit-text-stroke:0.12px #1f2937;">0</div>
<div class="t" style="left:846.90px;top:379.04px;font-size:12px;font-weight:400;color:#3a7af0;letter-spacing:-0.1px;-webkit-text-stroke:0.12px #3a7af0;">Setup Instructions</div>
<div class="t" style="left:1007.80px;top:379.04px;font-size:12px;font-weight:400;color:#1f2937;letter-spacing:-0.1px;-webkit-text-stroke:0.12px #1f2937;">2.5K</div>
<div class="t" style="left:1098.10px;top:379.04px;font-size:12px;font-weight:400;color:#1f2937;letter-spacing:-0.1px;-webkit-text-stroke:0.12px #1f2937;">47.97%</div>
<div class="t" style="left:1189.00px;top:379.04px;font-size:12px;font-weight:400;color:#1f2937;letter-spacing:-0.1px;-webkit-text-stroke:0.12px #1f2937;">17.22%</div>
<div class="t" style="left:1279.10px;top:379.04px;font-size:12px;font-weight:400;color:#1f2937;letter-spacing:-0.1px;-webkit-text-stroke:0.12px #1f2937;">1.49%</div>
<div class="t" style="left:1369.90px;top:379.04px;font-size:12px;font-weight:400;color:#1f2937;letter-spacing:-0.1px;-webkit-text-stroke:0.12px #1f2937;">0</div>
<div class="t" style="left:846.90px;top:418.44px;font-size:12px;font-weight:400;color:#3a7af0;letter-spacing:-0.1px;-webkit-text-stroke:0.12px #3a7af0;">Invite</div>
<div class="t" style="left:1007.80px;top:418.44px;font-size:12px;font-weight:400;color:#1f2937;letter-spacing:-0.1px;-webkit-text-stroke:0.12px #1f2937;">2.5K</div>
<div class="t" style="left:1098.10px;top:418.44px;font-size:12px;font-weight:400;color:#1f2937;letter-spacing:-0.1px;-webkit-text-stroke:0.12px #1f2937;">47.65%</div>
<div class="t" style="left:1189.00px;top:418.44px;font-size:12px;font-weight:400;color:#1f2937;letter-spacing:-0.1px;-webkit-text-stroke:0.12px #1f2937;">17.06%</div>
<div class="t" style="left:1279.10px;top:418.44px;font-size:12px;font-weight:400;color:#1f2937;letter-spacing:-0.1px;-webkit-text-stroke:0.12px #1f2937;">1.39%</div>
<div class="t" style="left:1369.90px;top:418.44px;font-size:12px;font-weight:400;color:#1f2937;letter-spacing:-0.1px;-webkit-text-stroke:0.12px #1f2937;">0</div>
<div class="t" style="right:791.80px;top:449.49px;font-size:11px;font-weight:400;color:#3a7af0;-webkit-text-stroke:0.15px #3a7af0;">See All</div>
<svg style="position:absolute;left:811.4px;top:450.8px;" width="9" height="8" viewBox="0 0 9 8"><path d="M0.8 3.7 H7.6 M4.6 0.8 L7.6 3.7 L4.6 6.6" fill="none" stroke="#3a7af0" stroke-width="1.05" stroke-linecap="round" stroke-linejoin="round"/></svg>
<div class="t" style="right:153.80px;top:449.49px;font-size:11px;font-weight:400;color:#3a7af0;-webkit-text-stroke:0.15px #3a7af0;">See All</div>
<svg style="position:absolute;left:1449.4px;top:450.8px;" width="9" height="8" viewBox="0 0 9 8"><path d="M0.8 3.7 H7.6 M4.6 0.8 L7.6 3.7 L4.6 6.6" fill="none" stroke="#3a7af0" stroke-width="1.05" stroke-linecap="round" stroke-linejoin="round"/></svg>
<div style="position:absolute;left:200px;top:488px;width:620.5px;height:167.5px;background:#f7f9f9;border-radius:5.5px;box-sizing:border-box;border:1px solid #f1f3f3;"></div>
<div class="t" style="left:217.50px;top:502.23px;font-size:11.9px;font-weight:400;color:#0f1a33;-webkit-text-stroke:0.60px #0f1a33;">Unique Open Rate %</div>
<svg style="position:absolute;left:0;top:0" width="1600" height="891"><line x1="255.5" y1="532.0310000000001" x2="255.5" y2="616.7" stroke="#e1e3e7" stroke-width="1.2"/><line x1="250.5" y1="616.7" x2="260.5" y2="616.7" stroke="#e1e3e7" stroke-width="1"/><text x="243.0" y="620.0" text-anchor="end" font-size="9.3" fill="#60656d" font-family="Liberation Sans">0%</text><line x1="250.5" y1="599.8000000000001" x2="260.5" y2="599.8000000000001" stroke="#e1e3e7" stroke-width="1"/><text x="243.0" y="603.1" text-anchor="end" font-size="9.3" fill="#60656d" font-family="Liberation Sans">10%</text><line x1="250.5" y1="582.9000000000001" x2="260.5" y2="582.9000000000001" stroke="#e1e3e7" stroke-width="1"/><text x="243.0" y="586.2" text-anchor="end" font-size="9.3" fill="#60656d" font-family="Liberation Sans">20%</text><line x1="250.5" y1="566.0" x2="260.5" y2="566.0" stroke="#e1e3e7" stroke-width="1"/><text x="243.0" y="569.3" text-anchor="end" font-size="9.3" fill="#60656d" font-family="Liberation Sans">30%</text><line x1="250.5" y1="549.1" x2="260.5" y2="549.1" stroke="#e1e3e7" stroke-width="1"/><text x="243.0" y="552.4" text-anchor="end" font-size="9.3" fill="#60656d" font-family="Liberation Sans">40%</text><line x1="250.5" y1="532.2" x2="260.5" y2="532.2" stroke="#e1e3e7" stroke-width="1"/><text x="243.0" y="535.5" text-anchor="end" font-size="9.3" fill="#60656d" font-family="Liberation Sans">50%</text><line x1="255.5" y1="616.7" x2="786.4499999999999" y2="616.7" stroke="#e1e3e7" stroke-width="1.2"/><line x1="255.5" y1="612.2" x2="255.5" y2="621.2" stroke="#e1e3e7" stroke-width="1"/><text x="255.5" y="635.3000000000001" text-anchor="middle" font-size="9.3" fill="#60656d" font-family="Liberation Sans">May 6</text><line x1="331.35" y1="612.2" x2="331.35" y2="621.2" stroke="#e1e3e7" stroke-width="1"/><line x1="407.2" y1="612.2" x2="407.2" y2="621.2" stroke="#e1e3e7" stroke-width="1"/><text x="407.2" y="635.3000000000001" text-anchor="middle" font-size="9.3" fill="#60656d" font-family="Liberation Sans">May 8</text><line x1="483.04999999999995" y1="612.2" x2="483.04999999999995" y2="621.2" stroke="#e1e3e7" stroke-width="1"/><line x1="558.9" y1="612.2" x2="558.9" y2="621.2" stroke="#e1e3e7" stroke-width="1"/><text x="558.9" y="635.3000000000001" text-anchor="middle" font-size="9.3" fill="#60656d" font-family="Liberation Sans">May 10</text><line x1="634.75" y1="612.2" x2="634.75" y2="621.2" stroke="#e1e3e7" stroke-width="1"/><line x1="710.5999999999999" y1="612.2" x2="710.5999999999999" y2="621.2" stroke="#e1e3e7" stroke-width="1"/><text x="710.5999999999999" y="635.3000000000001" text-anchor="middle" font-size="9.3" fill="#60656d" font-family="Liberation Sans">May 12</text><line x1="786.4499999999999" y1="612.2" x2="786.4499999999999" y2="621.2" stroke="#e1e3e7" stroke-width="1"/><line x1="255.5" y1="551.5505" x2="786.4499999999999" y2="551.5505" stroke="#c4c9cf" stroke-width="1.1" stroke-dasharray="2.6 2.5"/><text x="785.4499999999999" y="561.5505" text-anchor="end" font-size="10" fill="#a3aab3" stroke="#a3aab3" stroke-width="0.15" font-family="Liberation Sans">threshold 38.55%</text><line x1="255.5" y1="533.8900000000001" x2="331.35" y2="533.214" stroke="#4fd07f" stroke-width="1.1"/><line x1="331.35" y1="533.214" x2="407.2" y2="535.2420000000001" stroke="#4fd07f" stroke-width="1.1"/><line x1="407.2" y1="535.2420000000001" x2="483.04999999999995" y2="539.6360000000001" stroke="#4fd07f" stroke-width="1.1"/><line x1="483.04999999999995" y1="539.6360000000001" x2="558.9" y2="545.2130000000001" stroke="#4fd07f" stroke-width="1.1"/><line x1="558.9" y1="545.2130000000001" x2="634.75" y2="534.904" stroke="#4fd07f" stroke-width="1.1"/><line x1="634.75" y1="534.904" x2="710.5999999999999" y2="532.0310000000001" stroke="#4fd07f" stroke-width="1.1"/><line x1="710.5999999999999" y1="532.0310000000001" x2="728.0863772455089" y2="551.5505" stroke="#4fd07f" stroke-width="1.1"/><line x1="728.0863772455089" y1="551.5505" x2="786.4499999999999" y2="616.7" stroke="#4a7fe8" stroke-width="1.1"/><circle cx="255.5" cy="533.8900000000001" r="1.5" fill="#22c55e"/><circle cx="331.35" cy="533.214" r="1.5" fill="#22c55e"/><circle cx="407.2" cy="535.2420000000001" r="1.5" fill="#22c55e"/><circle cx="483.04999999999995" cy="539.6360000000001" r="1.5" fill="#22c55e"/><circle cx="558.9" cy="545.2130000000001" r="1.5" fill="#22c55e"/><circle cx="634.75" cy="534.904" r="1.5" fill="#22c55e"/><circle cx="710.5999999999999" cy="532.0310000000001" r="1.5" fill="#22c55e"/><circle cx="786.4499999999999" cy="616.7" r="1.5" fill="#3b76e8"/></svg>
<div class="t" style="right:791.30px;top:662.09px;font-size:11px;font-weight:400;color:#3a7af0;-webkit-text-stroke:0.15px #3a7af0;">Opened Emails</div>
<svg style="position:absolute;left:811.9px;top:663.4px;" width="9" height="8" viewBox="0 0 9 8"><path d="M0.8 3.7 H7.6 M4.6 0.8 L7.6 3.7 L4.6 6.6" fill="none" stroke="#3a7af0" stroke-width="1.05" stroke-linecap="round" stroke-linejoin="round"/></svg>
<div style="position:absolute;left:837px;top:488px;width:621.5px;height:167.5px;background:#f7f9f9;border-radius:5.5px;box-sizing:border-box;border:1px solid #f1f3f3;"></div>
<div class="t" style="left:854.50px;top:502.23px;font-size:11.9px;font-weight:400;color:#0f1a33;-webkit-text-stroke:0.60px #0f1a33;">Click Rate %</div>
<svg style="position:absolute;left:0;top:0" width="1600" height="891"><line x1="892.5" y1="533.404" x2="892.5" y2="616.5" stroke="#e1e3e7" stroke-width="1.2"/><line x1="887.5" y1="616.5" x2="897.5" y2="616.5" stroke="#e1e3e7" stroke-width="1"/><text x="880.0" y="619.8" text-anchor="end" font-size="9.3" fill="#60656d" font-family="Liberation Sans">0%</text><line x1="887.5" y1="594.4" x2="897.5" y2="594.4" stroke="#e1e3e7" stroke-width="1"/><text x="880.0" y="597.6999999999999" text-anchor="end" font-size="9.3" fill="#60656d" font-family="Liberation Sans">5%</text><line x1="887.5" y1="572.3" x2="897.5" y2="572.3" stroke="#e1e3e7" stroke-width="1"/><text x="880.0" y="575.5999999999999" text-anchor="end" font-size="9.3" fill="#60656d" font-family="Liberation Sans">10%</text><line x1="887.5" y1="550.2" x2="897.5" y2="550.2" stroke="#e1e3e7" stroke-width="1"/><text x="880.0" y="553.5" text-anchor="end" font-size="9.3" fill="#60656d" font-family="Liberation Sans">15%</text><line x1="892.5" y1="616.5" x2="1423.4499999999998" y2="616.5" stroke="#e1e3e7" stroke-width="1.2"/><line x1="892.5" y1="612.0" x2="892.5" y2="621.0" stroke="#e1e3e7" stroke-width="1"/><text x="892.5" y="635.1" text-anchor="middle" font-size="9.3" fill="#60656d" font-family="Liberation Sans">May 6</text><line x1="968.35" y1="612.0" x2="968.35" y2="621.0" stroke="#e1e3e7" stroke-width="1"/><line x1="1044.2" y1="612.0" x2="1044.2" y2="621.0" stroke="#e1e3e7" stroke-width="1"/><text x="1044.2" y="635.1" text-anchor="middle" font-size="9.3" fill="#60656d" font-family="Liberation Sans">May 8</text><line x1="1120.05" y1="612.0" x2="1120.05" y2="621.0" stroke="#e1e3e7" stroke-width="1"/><line x1="1195.9" y1="612.0" x2="1195.9" y2="621.0" stroke="#e1e3e7" stroke-width="1"/><text x="1195.9" y="635.1" text-anchor="middle" font-size="9.3" fill="#60656d" font-family="Liberation Sans">May 10</text><line x1="1271.75" y1="612.0" x2="1271.75" y2="621.0" stroke="#e1e3e7" stroke-width="1"/><line x1="1347.6" y1="612.0" x2="1347.6" y2="621.0" stroke="#e1e3e7" stroke-width="1"/><text x="1347.6" y="635.1" text-anchor="middle" font-size="9.3" fill="#60656d" font-family="Liberation Sans">May 12</text><line x1="1423.4499999999998" y1="612.0" x2="1423.4499999999998" y2="621.0" stroke="#e1e3e7" stroke-width="1"/><line x1="892.5" y1="539.2826" x2="968.35" y2="536.498" stroke="#4fd07f" stroke-width="1.1"/><line x1="968.35" y1="536.498" x2="1044.2" y2="533.404" stroke="#4fd07f" stroke-width="1.1"/><line x1="1044.2" y1="533.404" x2="1120.05" y2="554.178" stroke="#4fd07f" stroke-width="1.1"/><line x1="1120.05" y1="554.178" x2="1195.9" y2="544.896" stroke="#4fd07f" stroke-width="1.1"/><line x1="1195.9" y1="544.896" x2="1271.75" y2="537.3820000000001" stroke="#4fd07f" stroke-width="1.1"/><line x1="1271.75" y1="537.3820000000001" x2="1347.6" y2="537.3820000000001" stroke="#4fd07f" stroke-width="1.1"/><line x1="1347.6" y1="537.3820000000001" x2="1423.4499999999998" y2="616.5" stroke="#4fd07f" stroke-width="1.1"/><circle cx="892.5" cy="539.2826" r="1.5" fill="#22c55e"/><circle cx="968.35" cy="536.498" r="1.5" fill="#22c55e"/><circle cx="1044.2" cy="533.404" r="1.5" fill="#22c55e"/><circle cx="1120.05" cy="554.178" r="1.5" fill="#22c55e"/><circle cx="1195.9" cy="544.896" r="1.5" fill="#22c55e"/><circle cx="1271.75" cy="537.3820000000001" r="1.5" fill="#22c55e"/><circle cx="1347.6" cy="537.3820000000001" r="1.5" fill="#22c55e"/><circle cx="1423.4499999999998" cy="616.5" r="1.5" fill="#22c55e"/></svg>
<div class="t" style="right:153.30px;top:662.09px;font-size:11px;font-weight:400;color:#3a7af0;-webkit-text-stroke:0.15px #3a7af0;">Email Clicks</div>
<svg style="position:absolute;left:1449.9px;top:663.4px;" width="9" height="8" viewBox="0 0 9 8"><path d="M0.8 3.7 H7.6 M4.6 0.8 L7.6 3.7 L4.6 6.6" fill="none" stroke="#3a7af0" stroke-width="1.05" stroke-linecap="round" stroke-linejoin="round"/></svg>
<div style="position:absolute;left:200px;top:704px;width:620.5px;height:167.5px;background:#f7f9f9;border-radius:5.5px;box-sizing:border-box;border:1px solid #f1f3f3;"></div>
<div class="t" style="left:217.50px;top:718.23px;font-size:11.9px;font-weight:400;color:#0f1a33;-webkit-text-stroke:0.60px #0f1a33;">Bounce Rate %</div>
<svg style="position:absolute;left:0;top:0" width="1600" height="891"><line x1="255.5" y1="747.9" x2="255.5" y2="832.8" stroke="#e1e3e7" stroke-width="1.2"/><line x1="250.5" y1="832.8" x2="260.5" y2="832.8" stroke="#e1e3e7" stroke-width="1"/><text x="243.0" y="836.0999999999999" text-anchor="end" font-size="9.3" fill="#60656d" font-family="Liberation Sans">0%</text><line x1="250.5" y1="804.5" x2="260.5" y2="804.5" stroke="#e1e3e7" stroke-width="1"/><text x="243.0" y="807.8" text-anchor="end" font-size="9.3" fill="#60656d" font-family="Liberation Sans">1%</text><line x1="250.5" y1="776.1999999999999" x2="260.5" y2="776.1999999999999" stroke="#e1e3e7" stroke-width="1"/><text x="243.0" y="779.4999999999999" text-anchor="end" font-size="9.3" fill="#60656d" font-family="Liberation Sans">2%</text><line x1="250.5" y1="747.9" x2="260.5" y2="747.9" stroke="#e1e3e7" stroke-width="1"/><text x="243.0" y="751.1999999999999" text-anchor="end" font-size="9.3" fill="#60656d" font-family="Liberation Sans">3%</text><line x1="255.5" y1="832.8" x2="786.4499999999999" y2="832.8" stroke="#e1e3e7" stroke-width="1.2"/><line x1="255.5" y1="828.3" x2="255.5" y2="837.3" stroke="#e1e3e7" stroke-width="1"/><text x="255.5" y="851.4" text-anchor="middle" font-size="9.3" fill="#60656d" font-family="Liberation Sans">May 6</text><line x1="331.35" y1="828.3" x2="331.35" y2="837.3" stroke="#e1e3e7" stroke-width="1"/><line x1="407.2" y1="828.3" x2="407.2" y2="837.3" stroke="#e1e3e7" stroke-width="1"/><text x="407.2" y="851.4" text-anchor="middle" font-size="9.3" fill="#60656d" font-family="Liberation Sans">May 8</text><line x1="483.04999999999995" y1="828.3" x2="483.04999999999995" y2="837.3" stroke="#e1e3e7" stroke-width="1"/><line x1="558.9" y1="828.3" x2="558.9" y2="837.3" stroke="#e1e3e7" stroke-width="1"/><text x="558.9" y="851.4" text-anchor="middle" font-size="9.3" fill="#60656d" font-family="Liberation Sans">May 10</text><line x1="634.75" y1="828.3" x2="634.75" y2="837.3" stroke="#e1e3e7" stroke-width="1"/><line x1="710.5999999999999" y1="828.3" x2="710.5999999999999" y2="837.3" stroke="#e1e3e7" stroke-width="1"/><text x="710.5999999999999" y="851.4" text-anchor="middle" font-size="9.3" fill="#60656d" font-family="Liberation Sans">May 12</text><line x1="786.4499999999999" y1="828.3" x2="786.4499999999999" y2="837.3" stroke="#e1e3e7" stroke-width="1"/><line x1="255.5" y1="791.199" x2="331.35" y2="781.577" stroke="#4fd07f" stroke-width="1.1"/><line x1="331.35" y1="781.577" x2="407.2" y2="762.8989999999999" stroke="#4fd07f" stroke-width="1.1"/><line x1="407.2" y1="762.8989999999999" x2="483.04999999999995" y2="768.559" stroke="#4fd07f" stroke-width="1.1"/><line x1="483.04999999999995" y1="768.559" x2="558.9" y2="794.029" stroke="#4fd07f" stroke-width="1.1"/><line x1="558.9" y1="794.029" x2="634.75" y2="770.823" stroke="#4fd07f" stroke-width="1.1"/><line x1="634.75" y1="770.823" x2="710.5999999999999" y2="794.5949999999999" stroke="#4fd07f" stroke-width="1.1"/><line x1="710.5999999999999" y1="794.5949999999999" x2="786.4499999999999" y2="832.8" stroke="#4fd07f" stroke-width="1.1"/><circle cx="255.5" cy="791.199" r="1.5" fill="#22c55e"/><circle cx="331.35" cy="781.577" r="1.5" fill="#22c55e"/><circle cx="407.2" cy="762.8989999999999" r="1.5" fill="#22c55e"/><circle cx="483.04999999999995" cy="768.559" r="1.5" fill="#22c55e"/><circle cx="558.9" cy="794.029" r="1.5" fill="#22c55e"/><circle cx="634.75" cy="770.823" r="1.5" fill="#22c55e"/><circle cx="710.5999999999999" cy="794.5949999999999" r="1.5" fill="#22c55e"/><circle cx="786.4499999999999" cy="832.8" r="1.5" fill="#22c55e"/></svg>
<div class="t" style="right:791.30px;top:878.09px;font-size:11px;font-weight:400;color:#3a7af0;-webkit-text-stroke:0.15px #3a7af0;">Bounced Emails</div>
<svg style="position:absolute;left:811.9px;top:879.4px;" width="9" height="8" viewBox="0 0 9 8"><path d="M0.8 3.7 H7.6 M4.6 0.8 L7.6 3.7 L4.6 6.6" fill="none" stroke="#3a7af0" stroke-width="1.05" stroke-linecap="round" stroke-linejoin="round"/></svg>
<div style="position:absolute;left:837px;top:704px;width:621.5px;height:167.5px;background:#f7f9f9;border-radius:5.5px;box-sizing:border-box;border:1px solid #f1f3f3;"></div>
<div class="t" style="left:854.50px;top:718.23px;font-size:11.9px;font-weight:400;color:#0f1a33;-webkit-text-stroke:0.60px #0f1a33;">Spam Complaints %</div>
<svg style="position:absolute;left:0;top:0" width="1600" height="891"><defs><clipPath id="clipL837_704"><rect x="854.6" y="704" width="200" height="167"/></clipPath></defs><line x1="892.5" y1="748.525" x2="892.5" y2="833" stroke="#e1e3e7" stroke-width="1.2"/><line x1="887.5" y1="833" x2="897.5" y2="833" stroke="#e1e3e7" stroke-width="1"/><text clip-path="url(#clipL837_704)" x="880.0" y="836.3" text-anchor="end" font-size="9.3" fill="#60656d" font-family="Liberation Sans">0%</text><line x1="887.5" y1="817.5" x2="897.5" y2="817.5" stroke="#e1e3e7" stroke-width="1"/><text clip-path="url(#clipL837_704)" x="880.0" y="820.8" text-anchor="end" font-size="9.3" fill="#60656d" font-family="Liberation Sans">0.02%</text><line x1="887.5" y1="802.0" x2="897.5" y2="802.0" stroke="#e1e3e7" stroke-width="1"/><text clip-path="url(#clipL837_704)" x="880.0" y="805.3" text-anchor="end" font-size="9.3" fill="#60656d" font-family="Liberation Sans">0.04%</text><line x1="887.5" y1="786.5" x2="897.5" y2="786.5" stroke="#e1e3e7" stroke-width="1"/><text clip-path="url(#clipL837_704)" x="880.0" y="789.8" text-anchor="end" font-size="9.3" fill="#60656d" font-family="Liberation Sans">0.06%</text><line x1="887.5" y1="771.0" x2="897.5" y2="771.0" stroke="#e1e3e7" stroke-width="1"/><text clip-path="url(#clipL837_704)" x="880.0" y="774.3" text-anchor="end" font-size="9.3" fill="#60656d" font-family="Liberation Sans">0.08%</text><line x1="887.5" y1="755.5" x2="897.5" y2="755.5" stroke="#e1e3e7" stroke-width="1"/><text clip-path="url(#clipL837_704)" x="880.0" y="758.8" text-anchor="end" font-size="9.3" fill="#60656d" font-family="Liberation Sans">0.1%</text><line x1="892.5" y1="833" x2="1423.4499999999998" y2="833" stroke="#e1e3e7" stroke-width="1.2"/><line x1="892.5" y1="828.5" x2="892.5" y2="837.5" stroke="#e1e3e7" stroke-width="1"/><text x="892.5" y="851.6" text-anchor="middle" font-size="9.3" fill="#60656d" font-family="Liberation Sans">May 6</text><line x1="968.35" y1="828.5" x2="968.35" y2="837.5" stroke="#e1e3e7" stroke-width="1"/><line x1="1044.2" y1="828.5" x2="1044.2" y2="837.5" stroke="#e1e3e7" stroke-width="1"/><text x="1044.2" y="851.6" text-anchor="middle" font-size="9.3" fill="#60656d" font-family="Liberation Sans">May 8</text><line x1="1120.05" y1="828.5" x2="1120.05" y2="837.5" stroke="#e1e3e7" stroke-width="1"/><line x1="1195.9" y1="828.5" x2="1195.9" y2="837.5" stroke="#e1e3e7" stroke-width="1"/><text x="1195.9" y="851.6" text-anchor="middle" font-size="9.3" fill="#60656d" font-family="Liberation Sans">May 10</text><line x1="1271.75" y1="828.5" x2="1271.75" y2="837.5" stroke="#e1e3e7" stroke-width="1"/><line x1="1347.6" y1="828.5" x2="1347.6" y2="837.5" stroke="#e1e3e7" stroke-width="1"/><text x="1347.6" y="851.6" text-anchor="middle" font-size="9.3" fill="#60656d" font-family="Liberation Sans">May 12</text><line x1="1423.4499999999998" y1="828.5" x2="1423.4499999999998" y2="837.5" stroke="#e1e3e7" stroke-width="1"/><line x1="892.5" y1="755.5" x2="1423.4499999999998" y2="755.5" stroke="#c4c9cf" stroke-width="1.1" stroke-dasharray="2.6 2.5"/><text x="1422.4499999999998" y="765.5" text-anchor="end" font-size="10" fill="#a3aab3" stroke="#a3aab3" stroke-width="0.15" font-family="Liberation Sans">threshold 0.10%</text><line x1="892.5" y1="833" x2="968.35" y2="777.2" stroke="#4fd07f" stroke-width="1.1"/><line x1="968.35" y1="777.2" x2="1044.2" y2="833" stroke="#4fd07f" stroke-width="1.1"/><line x1="1044.2" y1="833" x2="1120.05" y2="833" stroke="#4fd07f" stroke-width="1.1"/><line x1="1120.05" y1="833" x2="1195.9" y2="833" stroke="#4fd07f" stroke-width="1.1"/><line x1="1195.9" y1="833" x2="1271.75" y2="833" stroke="#4fd07f" stroke-width="1.1"/><line x1="1271.75" y1="833" x2="1341.3371559633026" y2="755.5" stroke="#4fd07f" stroke-width="1.1"/><line x1="1341.3371559633026" y1="755.5" x2="1347.6" y2="748.525" stroke="#ef4444" stroke-width="1.1"/><line x1="1347.6" y1="748.525" x2="1353.8628440366972" y2="755.5" stroke="#ef4444" stroke-width="1.1"/><line x1="1353.8628440366972" y1="755.5" x2="1423.4499999999998" y2="833" stroke="#4fd07f" stroke-width="1.1"/><circle cx="892.5" cy="833" r="1.5" fill="#22c55e"/><circle cx="968.35" cy="777.2" r="1.5" fill="#22c55e"/><circle cx="1044.2" cy="833" r="1.5" fill="#22c55e"/><circle cx="1120.05" cy="833" r="1.5" fill="#22c55e"/><circle cx="1195.9" cy="833" r="1.5" fill="#22c55e"/><circle cx="1271.75" cy="833" r="1.5" fill="#22c55e"/><circle cx="1347.6" cy="748.525" r="1.5" fill="#ef4444"/><circle cx="1423.4499999999998" cy="833" r="1.5" fill="#22c55e"/></svg>
<div class="t" style="right:153.30px;top:878.09px;font-size:11px;font-weight:400;color:#3a7af0;-webkit-text-stroke:0.15px #3a7af0;">Spam Complaints</div>
<svg style="position:absolute;left:1449.9px;top:879.4px;" width="9" height="8" viewBox="0 0 9 8"><path d="M0.8 3.7 H7.6 M4.6 0.8 L7.6 3.7 L4.6 6.6" fill="none" stroke="#3a7af0" stroke-width="1.05" stroke-linecap="round" stroke-linejoin="round"/></svg>
</body></html>
